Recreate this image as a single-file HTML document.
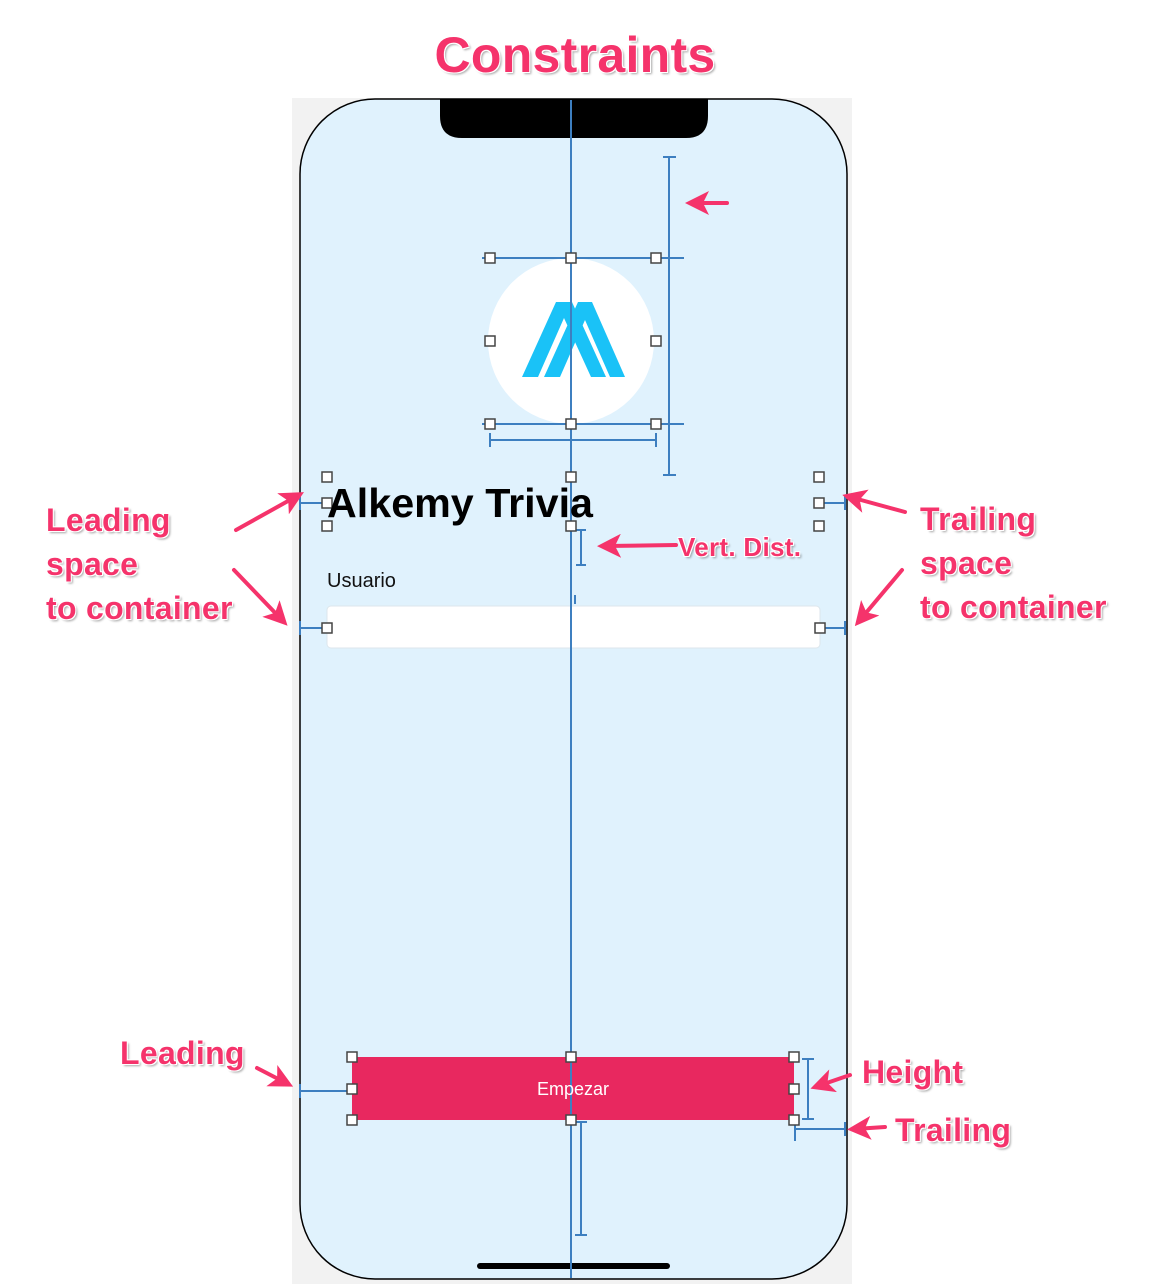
<!DOCTYPE html>
<html><head><meta charset="utf-8"><style>
html,body{margin:0;padding:0;background:#fff;}
body{width:1164px;height:1284px;position:relative;overflow:hidden;font-family:"Liberation Sans",sans-serif;}
.lab{position:absolute;color:#f5336b;font-weight:bold;font-size:32px;letter-spacing:0.3px;line-height:44px;white-space:nowrap;
text-shadow:1px 1px 0 #fff,-1px -1px 0 #fff,1px -1px 0 #fff,-1px 1px 0 #fff,2px 2px 2px rgba(0,0,0,.35);}
</style></head><body>
<svg width="1164" height="1284" style="position:absolute;left:0;top:0">
<defs>
<marker id="ah" markerWidth="6" markerHeight="6" refX="4" refY="3" orient="auto" markerUnits="strokeWidth">
<path d="M0,0 L6,3 L0,6 L1.5,3 z" fill="#f5336b"/></marker>
</defs>
<rect x="292" y="98" width="560" height="1186" fill="#f2f2f2"/>
<rect x="300" y="99" width="547" height="1180" rx="75" fill="#e0f2fd" stroke="#000" stroke-width="1.5"/>
<path d="M440,99 H708 V116 Q708,138 686,138 H462 Q440,138 440,116 Z" fill="#000"/>
<circle cx="571" cy="341" r="83" fill="#fff"/>
<polygon points="522,377 556,302 572,302 606,377 591,377 564,318 538,377" fill="#1ac2f7"/>
<polygon points="544,377 578,302 592,302 625,377 610,377 585,320 560,377" fill="#1ac2f7"/>
<rect x="327" y="606" width="493" height="42" rx="4" fill="#fff" stroke="#dde6ec"/>
<rect x="352" y="1057" width="442" height="63" fill="#e8285f"/>
<rect x="477" y="1263" width="193" height="6" rx="3" fill="#000"/>
<g stroke="#3d7fc0" stroke-width="2" fill="none">
<line x1="571" y1="100" x2="571" y2="1278"/>
<line x1="482" y1="258" x2="684" y2="258"/>
<line x1="482" y1="424" x2="684" y2="424"/>
<path d="M490,433 V447 M490,440 H656 M656,433 V447"/>
<path d="M663,157 H676 M669,157 V475 M663,475 H676"/>
<path d="M300,503 H327 M819,503 H845 M845,496 V510 M300,496 V510"/>
<path d="M576,530 H586 M581,530 V565 M576,565 H586"/>
<path d="M575,595 V604"/>
<path d="M300,628 H327 M300,621 V635 M820,628 H845 M845,621 V635"/>
<path d="M300,1091 H352 M300,1084 V1098"/>
<path d="M802,1059 H814 M808,1059 V1119 M802,1119 H814"/>
<path d="M795,1129 H845 M845,1122 V1136 M795,1122 V1141"/>
<path d="M575,1122 H587 M581,1122 V1235 M575,1235 H587"/>
</g>
<g fill="#fff" stroke="#444" stroke-width="1.5">
<rect x="485" y="253" width="10" height="10"/><rect x="566" y="253" width="10" height="10"/><rect x="651" y="253" width="10" height="10"/>
<rect x="485" y="336" width="10" height="10"/><rect x="651" y="336" width="10" height="10"/>
<rect x="485" y="419" width="10" height="10"/><rect x="566" y="419" width="10" height="10"/><rect x="651" y="419" width="10" height="10"/>
<rect x="322" y="472" width="10" height="10"/><rect x="566" y="472" width="10" height="10"/><rect x="814" y="472" width="10" height="10"/>
<rect x="322" y="498" width="10" height="10"/><rect x="814" y="498" width="10" height="10"/>
<rect x="322" y="521" width="10" height="10"/><rect x="566" y="521" width="10" height="10"/><rect x="814" y="521" width="10" height="10"/>
<rect x="322" y="623" width="10" height="10"/><rect x="815" y="623" width="10" height="10"/>
<rect x="347" y="1052" width="10" height="10"/><rect x="566" y="1052" width="10" height="10"/><rect x="789" y="1052" width="10" height="10"/>
<rect x="347" y="1084" width="10" height="10"/><rect x="789" y="1084" width="10" height="10"/>
<rect x="347" y="1115" width="10" height="10"/><rect x="566" y="1115" width="10" height="10"/><rect x="789" y="1115" width="10" height="10"/>
</g>
<text x="327" y="517" font-family="Liberation Sans,sans-serif" font-weight="bold" font-size="41" fill="#000" textLength="266" lengthAdjust="spacingAndGlyphs">Alkemy Trivia</text>
<text x="327" y="587" font-family="Liberation Sans,sans-serif" font-size="20" fill="#111">Usuario</text>
<text x="573" y="1095" text-anchor="middle" font-family="Liberation Sans,sans-serif" font-size="18" fill="#fff">Empezar</text>
<g stroke="#f5336b" stroke-width="4" stroke-linecap="round" marker-end="url(#ah)">
<line x1="236" y1="530" x2="297" y2="496"/>
<line x1="234" y1="570" x2="282" y2="620"/>
<line x1="905" y1="512" x2="850" y2="497"/>
<line x1="902" y1="570" x2="860" y2="620"/>
<line x1="676" y1="545" x2="605" y2="546"/>
<line x1="727" y1="203" x2="693" y2="203"/>
<line x1="257" y1="1068" x2="286" y2="1083"/>
<line x1="850" y1="1075" x2="818" y2="1086"/>
<line x1="885" y1="1127" x2="855" y2="1129"/>
</g>
</svg>
<div class="lab" style="left:0;width:1150px;text-align:center;top:26px;font-size:50px;line-height:58px">Constraints</div>
<div class="lab" style="left:46px;top:498px">Leading<br>space<br>to container</div>
<div class="lab" style="left:920px;top:497px">Trailing<br>space<br>to container</div>
<div class="lab" style="left:678px;top:531px;font-size:26px;line-height:32px">Vert. Dist.</div>
<div class="lab" style="left:120px;top:1031px">Leading</div>
<div class="lab" style="left:862px;top:1050px">Height</div>
<div class="lab" style="left:895px;top:1108px">Trailing</div>
</body></html>
